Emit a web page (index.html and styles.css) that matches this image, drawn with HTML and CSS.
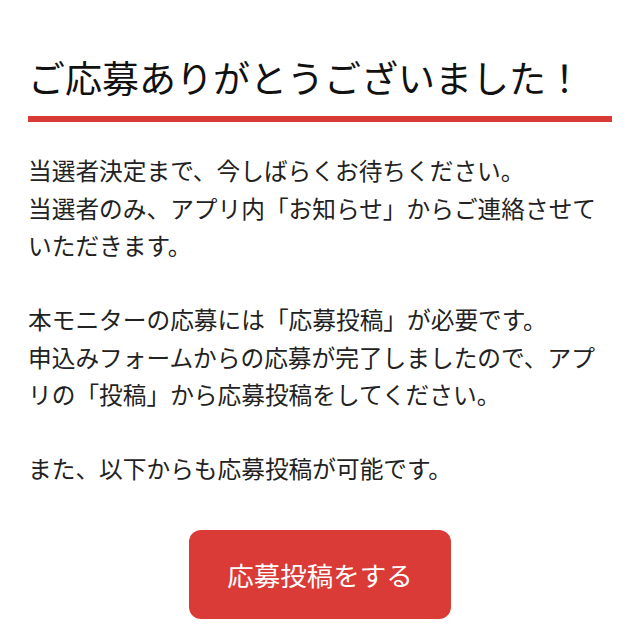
FILE: index.html
```html
<!DOCTYPE html>
<html lang="ja">
<head>
<meta charset="utf-8">
<link rel="stylesheet" href="styles.css">
</head>
<body>
<main class="page">
  <h1 class="title">ご応募ありがとうございました！</h1>
  <div class="rule"></div>
  <p class="para first">当選者決定まで、今しばらくお待ちください。<br>当選者のみ、アプリ内「お知らせ」からご連絡させていただきます。</p>
  <p class="para">本モニターの応募には「応募投稿」が必要です。<br>申込みフォームからの応募が完了しましたので、アプリの「投稿」から応募投稿をしてください。</p>
  <p class="para">また、以下からも応募投稿が可能です。</p>
  <div class="actions"><a class="btn">応募投稿をする</a></div>
</main>
</body>
</html>
```
FILE: styles.css
```css
html, body { margin: 0; padding: 0; background: #fff; }
body { font-family: "Noto Sans CJK JP", "Noto Sans", sans-serif; color: #222; }
.page { padding: 0 28px; }
.title {
  margin: 0;
  padding-top: 53px;
  font-size: 37px;
  line-height: 48px;
  font-weight: 400;
  color: #111;
}
.rule { height: 6px; background: #d93a36; margin-top: 15px; }
.para {
  margin: 36.5px 0 0;
  font-size: 23.7px;
  line-height: 37.5px;
}
.para.first { margin-top: 30px; }
.actions { display: flex; justify-content: center; margin-top: 42px; }
.btn {
  width: 262px;
  height: 89px;
  border-radius: 12px;
  background: #db3b37;
  color: #fff;
  font-size: 26.5px;
  display: flex;
  align-items: center;
  justify-content: center;
}
```
